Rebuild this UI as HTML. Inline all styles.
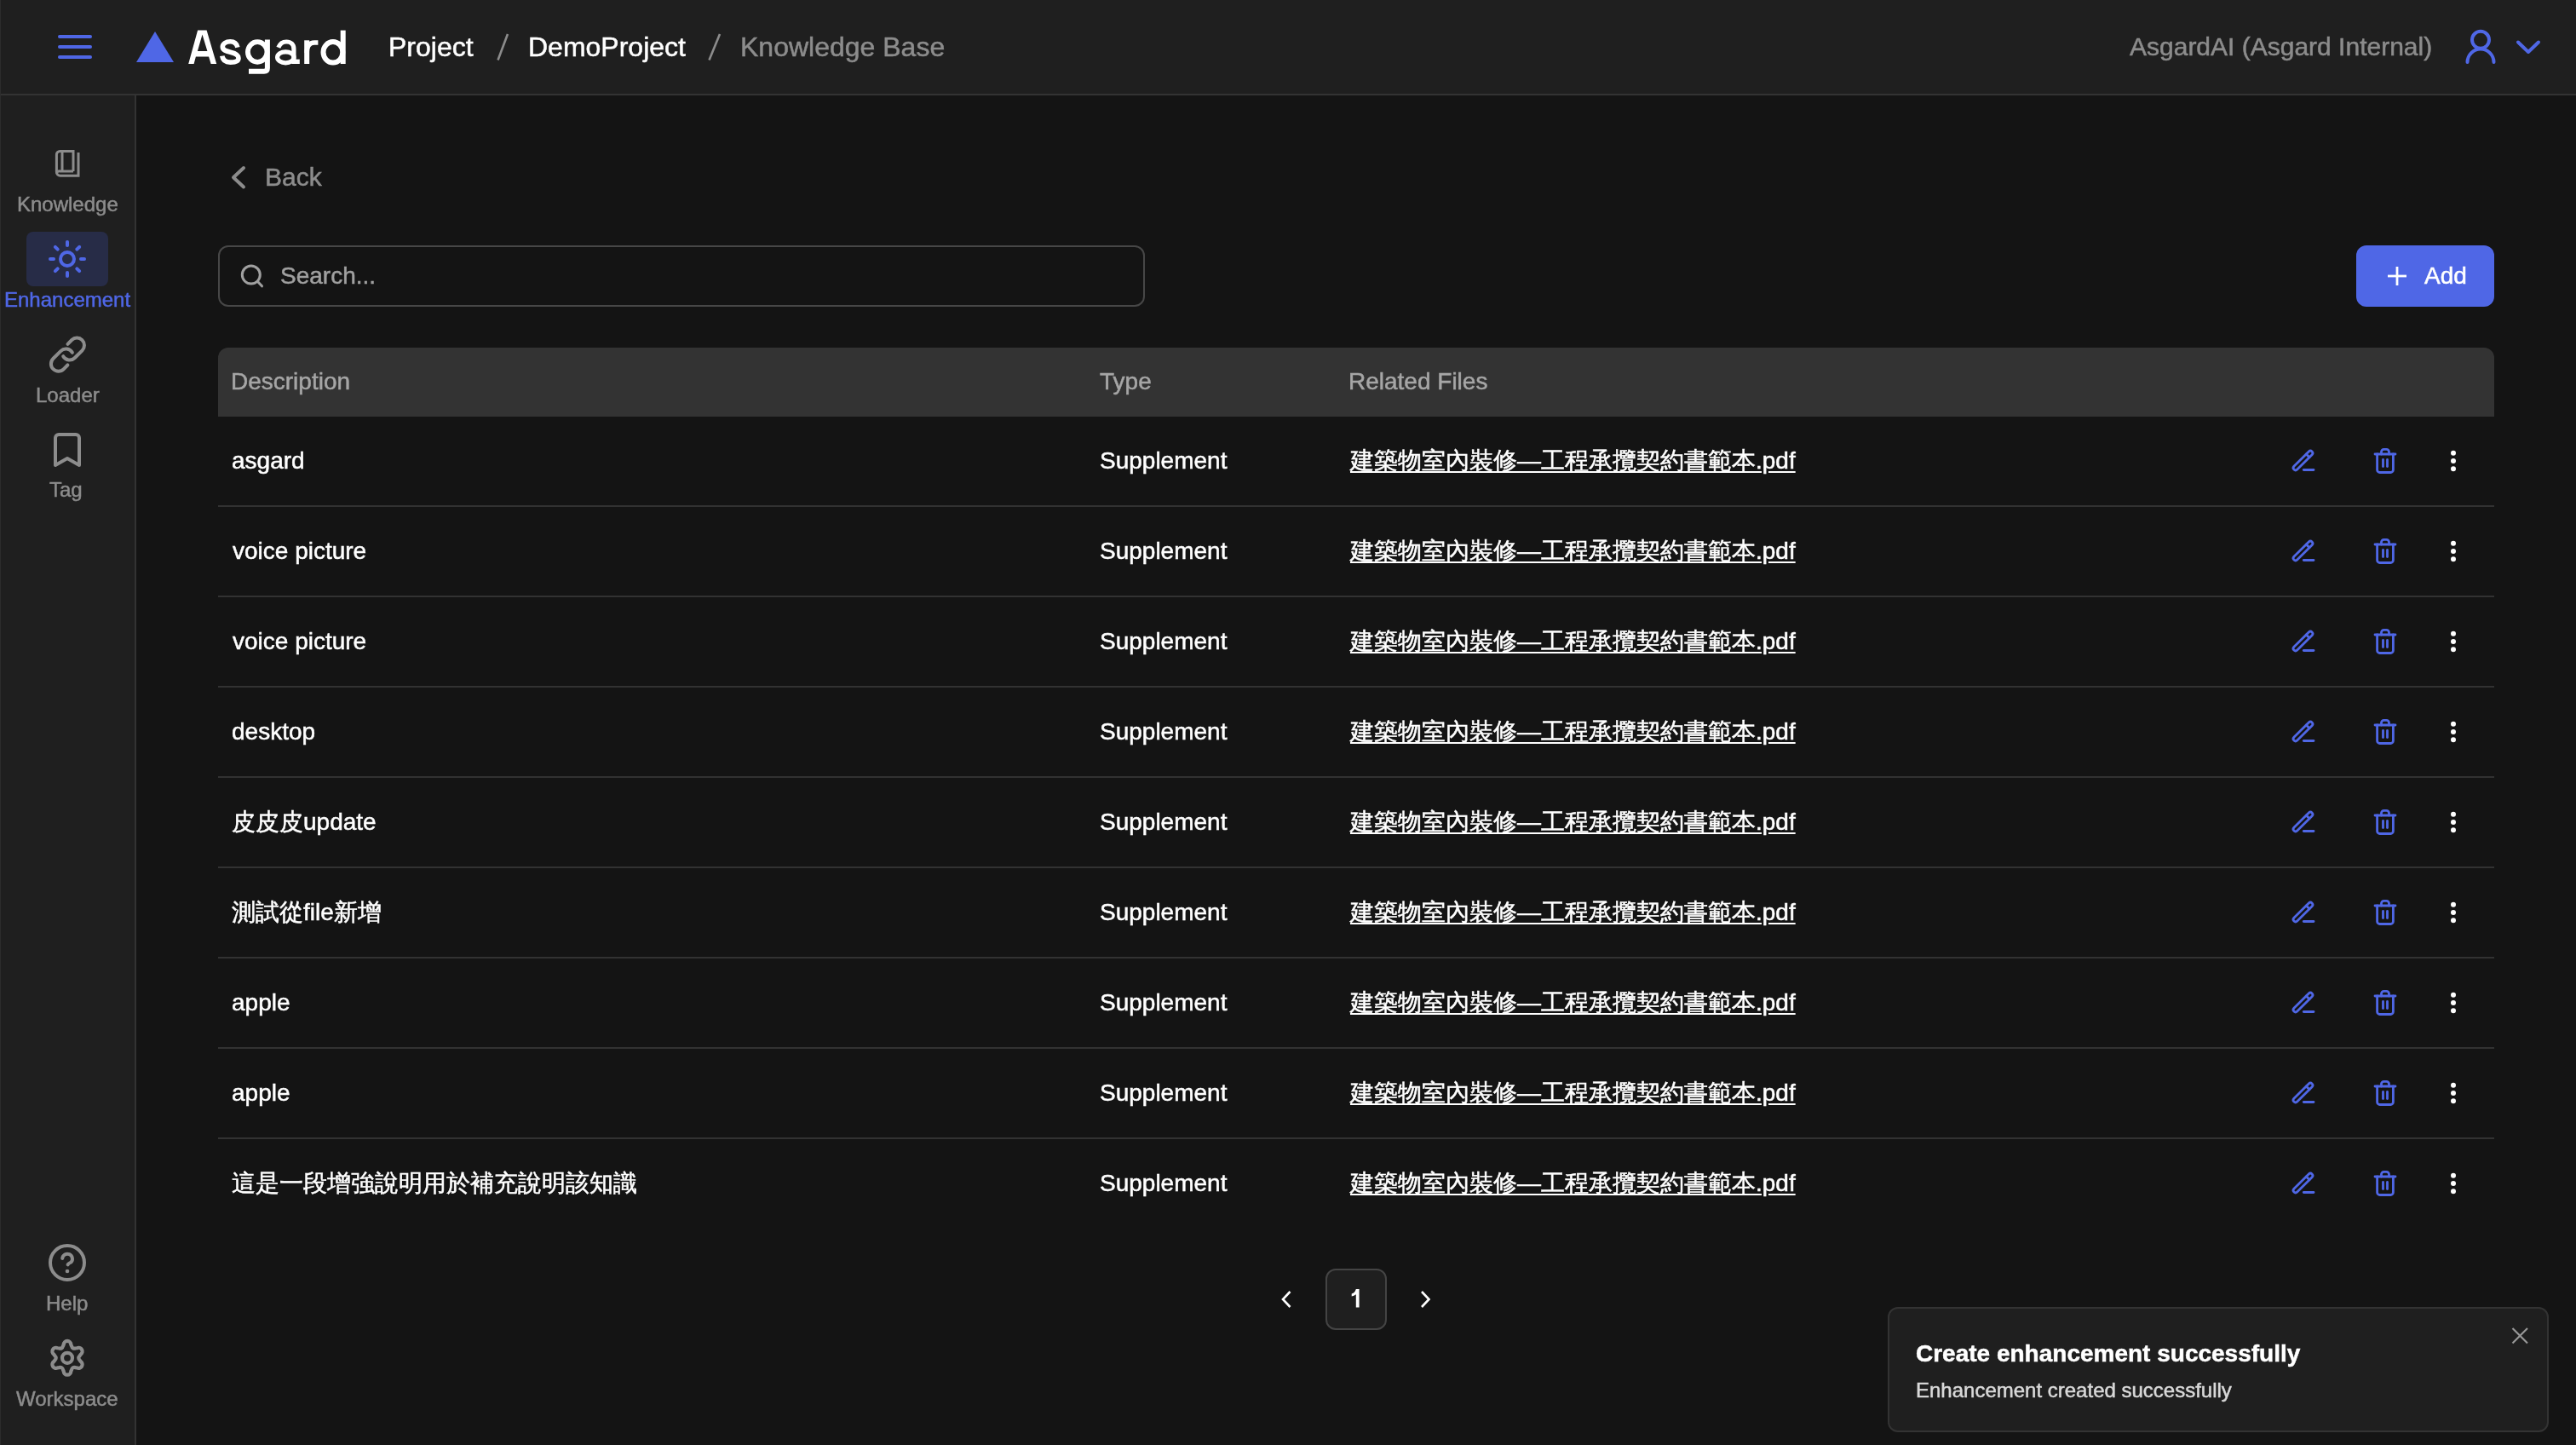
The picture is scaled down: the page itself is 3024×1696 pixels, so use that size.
<!DOCTYPE html>
<html><head><meta charset="utf-8"><style>
html,body{margin:0;padding:0;}
body{width:3024px;height:1696px;overflow:hidden;background:#141414;position:relative;font-family:"Liberation Sans",sans-serif;}
.t{position:absolute;white-space:pre;line-height:1;will-change:transform;-webkit-text-stroke-width:0.5px;}
.b{position:absolute;box-sizing:border-box;}
svg{position:absolute;left:0;top:0;overflow:visible;}
</style></head><body>
<div class="b" style="left:0;top:0;width:3024px;height:112px;background:#1f1f1f;border-bottom:2px solid #333333;"></div>
<div class="b" style="left:0;top:112px;width:160px;height:1584px;background:#1f1f1f;border-right:2px solid #333333;"></div>
<div class="b" style="left:0;top:0;width:1px;height:1696px;background:#2c2c2c;"></div>
<div class="b" style="left:31px;top:272px;width:96px;height:64px;background:#272c47;border-radius:8px;"></div>
<div class="b" style="left:256px;top:288px;width:1088px;height:72px;border:2px solid #474747;border-radius:12px;"></div>
<div class="b" style="left:2766px;top:288px;width:162px;height:72px;background:#4f67e6;border-radius:12px;"></div>
<div class="b" style="left:256px;top:408px;width:2672px;height:81px;background:#333333;border-radius:12px 12px 0 0;"></div>
<div class="b" style="left:256px;top:593px;width:2672px;height:2px;background:#323232;"></div>
<div class="b" style="left:256px;top:699px;width:2672px;height:2px;background:#323232;"></div>
<div class="b" style="left:256px;top:805px;width:2672px;height:2px;background:#323232;"></div>
<div class="b" style="left:256px;top:911px;width:2672px;height:2px;background:#323232;"></div>
<div class="b" style="left:256px;top:1017px;width:2672px;height:2px;background:#323232;"></div>
<div class="b" style="left:256px;top:1123px;width:2672px;height:2px;background:#323232;"></div>
<div class="b" style="left:256px;top:1229px;width:2672px;height:2px;background:#323232;"></div>
<div class="b" style="left:256px;top:1335px;width:2672px;height:2px;background:#323232;"></div>
<div class="b" style="left:1556px;top:1489px;width:72px;height:72px;background:#1f1f1f;border:2px solid #444444;border-radius:12px;"></div>
<div class="b" style="left:2216px;top:1534px;width:776px;height:147px;background:#1f1f1f;border:2px solid #333333;border-radius:12px;"></div>
<div class="t" style="left:455.88px;top:39.41px;font-size:32px;color:#ffffff;">Project</div>
<div class="t" style="left:619.98px;top:39.41px;font-size:32px;color:#ffffff;">DemoProject</div>
<div class="t" style="left:868.88px;top:39.41px;font-size:32px;color:#8c8c8c;">Knowledge Base</div>
<div class="t" style="left:2500.44px;top:40.10px;font-size:30px;color:#8c8c8c;">AsgardAI (Asgard Internal)</div>
<div class="t" style="left:19.62px;top:227.68px;font-size:24px;color:#8c8c8c;">Knowledge</div>
<div class="t" style="left:4.95px;top:339.68px;font-size:24px;color:#4f67e6;">Enhancement</div>
<div class="t" style="left:41.63px;top:451.68px;font-size:24px;color:#8c8c8c;">Loader</div>
<div class="t" style="left:58.32px;top:562.68px;font-size:24px;color:#8c8c8c;">Tag</div>
<div class="t" style="left:54.32px;top:1517.68px;font-size:24px;color:#8c8c8c;">Help</div>
<div class="t" style="left:18.98px;top:1629.68px;font-size:24px;color:#8c8c8c;">Workspace</div>
<div class="t" style="left:310.54px;top:193.10px;font-size:30px;color:#8c8c8c;">Back</div>
<div class="t" style="left:329.43px;top:309.79px;font-size:28px;color:#a0a0a0;">Search...</div>
<div class="t" style="left:2845.95px;top:309.79px;font-size:28px;color:#ffffff;">Add</div>
<div class="t" style="left:270.70px;top:433.79px;font-size:28px;color:#a6a6a6;">Description</div>
<div class="t" style="left:1291.37px;top:433.79px;font-size:28px;color:#a6a6a6;">Type</div>
<div class="t" style="left:1582.70px;top:433.79px;font-size:28px;color:#a6a6a6;">Related Files</div>
<div class="t" style="left:271.81px;top:526.79px;font-size:28px;color:#ffffff;">asgard</div>
<div class="t" style="left:1290.73px;top:526.79px;font-size:28px;color:#ffffff;">Supplement</div>
<div class="t" style="left:1585.00px;top:526.79px;font-size:28px;color:#ffffff;text-decoration:underline;text-underline-offset:3px;">建築物室內裝修—工程承攬契約書範本.pdf</div>
<div class="t" style="left:272.90px;top:632.79px;font-size:28px;color:#ffffff;">voice picture</div>
<div class="t" style="left:1290.73px;top:632.79px;font-size:28px;color:#ffffff;">Supplement</div>
<div class="t" style="left:1585.00px;top:632.79px;font-size:28px;color:#ffffff;text-decoration:underline;text-underline-offset:3px;">建築物室內裝修—工程承攬契約書範本.pdf</div>
<div class="t" style="left:272.90px;top:738.79px;font-size:28px;color:#ffffff;">voice picture</div>
<div class="t" style="left:1290.73px;top:738.79px;font-size:28px;color:#ffffff;">Supplement</div>
<div class="t" style="left:1585.00px;top:738.79px;font-size:28px;color:#ffffff;text-decoration:underline;text-underline-offset:3px;">建築物室內裝修—工程承攬契約書範本.pdf</div>
<div class="t" style="left:271.82px;top:844.79px;font-size:28px;color:#ffffff;">desktop</div>
<div class="t" style="left:1290.73px;top:844.79px;font-size:28px;color:#ffffff;">Supplement</div>
<div class="t" style="left:1585.00px;top:844.79px;font-size:28px;color:#ffffff;text-decoration:underline;text-underline-offset:3px;">建築物室內裝修—工程承攬契約書範本.pdf</div>
<div class="t" style="left:272.20px;top:950.79px;font-size:28px;color:#ffffff;">皮皮皮update</div>
<div class="t" style="left:1290.73px;top:950.79px;font-size:28px;color:#ffffff;">Supplement</div>
<div class="t" style="left:1585.00px;top:950.79px;font-size:28px;color:#ffffff;text-decoration:underline;text-underline-offset:3px;">建築物室內裝修—工程承攬契約書範本.pdf</div>
<div class="t" style="left:272.20px;top:1056.79px;font-size:28px;color:#ffffff;">測試從file新增</div>
<div class="t" style="left:1290.73px;top:1056.79px;font-size:28px;color:#ffffff;">Supplement</div>
<div class="t" style="left:1585.00px;top:1056.79px;font-size:28px;color:#ffffff;text-decoration:underline;text-underline-offset:3px;">建築物室內裝修—工程承攬契約書範本.pdf</div>
<div class="t" style="left:271.81px;top:1162.79px;font-size:28px;color:#ffffff;">apple</div>
<div class="t" style="left:1290.73px;top:1162.79px;font-size:28px;color:#ffffff;">Supplement</div>
<div class="t" style="left:1585.00px;top:1162.79px;font-size:28px;color:#ffffff;text-decoration:underline;text-underline-offset:3px;">建築物室內裝修—工程承攬契約書範本.pdf</div>
<div class="t" style="left:271.81px;top:1268.79px;font-size:28px;color:#ffffff;">apple</div>
<div class="t" style="left:1290.73px;top:1268.79px;font-size:28px;color:#ffffff;">Supplement</div>
<div class="t" style="left:1585.00px;top:1268.79px;font-size:28px;color:#ffffff;text-decoration:underline;text-underline-offset:3px;">建築物室內裝修—工程承攬契約書範本.pdf</div>
<div class="t" style="left:272.20px;top:1374.79px;font-size:28px;color:#ffffff;">這是一段增強說明用於補充說明該知識</div>
<div class="t" style="left:1290.73px;top:1374.79px;font-size:28px;color:#ffffff;">Supplement</div>
<div class="t" style="left:1585.00px;top:1374.79px;font-size:28px;color:#ffffff;text-decoration:underline;text-underline-offset:3px;">建築物室內裝修—工程承攬契約書範本.pdf</div>
<div class="t" style="left:2249.35px;top:1574.79px;font-size:28px;color:#ffffff;font-weight:700;">Create enhancement successfully</div>
<div class="t" style="left:2248.53px;top:1620.18px;font-size:24px;color:#d9d9d9;">Enhancement created successfully</div>
<svg width="3024" height="1696"><rect x="68" y="41" width="40" height="4" rx="2" fill="#4f67e6"/><rect x="68" y="53" width="40" height="4" rx="2" fill="#4f67e6"/><rect x="68" y="65" width="40" height="4" rx="2" fill="#4f67e6"/><polygon points="160,73 182,37 204,73" fill="#4f67e6"/><path fill="#ffffff" fill-rule="evenodd" d="M221.2 75.1 L232.1 35.5 L242.6 35.5 L254.2 75.1 L247.6 75.1 L245.1 66.5 L229.9 66.5 L227.6 75.1 Z M237.5 40.6 L231.9 59.9 L243.4 59.9 Z"/><g fill="none" stroke="#ffffff" stroke-linecap="butt"><path stroke-width="5.6" d="M278.9 55.6 C277.8 51, 274.5 48.8, 270.3 48.8 C265.3 48.8, 261.3 51.3, 261.3 55 C261.3 58.8, 265 59.8, 270.5 61.2 C276.5 62.6, 280 64.2, 280 68.2 C280 71.6, 276 73.1, 270.5 73.1 C265 73.1, 261.4 70.5, 260.8 65.6"/><ellipse stroke-width="5.8" cx="302.2" cy="61" rx="11.3" ry="11.8"/><path stroke-width="6" d="M313.9 46.6 V80 Q313.9 83.8 310 83.8 H292"/><ellipse stroke-width="5.2" cx="335.3" cy="67.3" rx="9.7" ry="6.5"/><path stroke-width="5.2" d="M326.8 55.8 C328.5 51.5, 331.5 49, 336.2 49 C341.5 49, 344.9 52, 344.9 57.5 V75"/><path stroke-width="5.4" d="M344 72.3 H351.8"/><path stroke-width="6" d="M360.2 47.3 V75"/><path stroke-width="5.4" d="M360.2 62 C360.2 54, 363.5 50, 369 50 H373.4"/><ellipse stroke-width="6" cx="390.9" cy="61.3" rx="11.4" ry="12.2"/><path stroke-width="6" d="M402.7 35.6 V75"/></g><g fill="none" stroke="#4f67e6" stroke-width="4" stroke-linecap="round" stroke-linejoin="round"><circle cx="2912" cy="46.8" r="10"/><path d="M2896.5 73 A15.5 15.5 0 0 1 2927.5 73"/><polyline points="2956,49.5 2968,61 2980,49.5"/></g><g fill="none" stroke="#8c8c8c" stroke-width="3" stroke-linecap="butt" stroke-linejoin="miter"><path d="M86 201 V177.4 H70.5 A4 4 0 0 0 66.4 181.5 V202 A4.3 4.3 0 0 0 70.7 206.3 H92 V178.9"/><path d="M86 201 H70.5 A3 3 0 0 0 66.6 203.5"/><path d="M73 177.4 V201"/></g><g fill="none" stroke="#8c8c8c" stroke-width="4" stroke-linecap="round" stroke-linejoin="round"><g transform="translate(53.5,390) scale(2.17)"><path stroke-width="1.85" d="M14.464 11 A4 4 0 0 0 8.172 10.172 l-4 4 a4 4 0 1 0 5.656 5.656 l2.1-2.1 M9.536 13 A4 4 0 0 0 15.828 13.828 l4-4 a4 4 0 0 0-5.656-5.656 l-2.2 2.2"/></g><path d="M65 546 V514 A4 4 0 0 1 69 510 H89 A4 4 0 0 1 93 514 V546 L79 538 Z"/><circle cx="79" cy="1482" r="20"/><path d="M73.2 1477 A5.9 5.9 0 1 1 83.5 1481.5 Q80 1483 79.6 1484.4"/></g><circle cx="79" cy="1492" r="2.3" fill="#8c8c8c"/><path d="M74.00 1579.80 L74.70 1578.20 A4.3 4.3 0 0 1 83.30 1578.20 L84.00 1579.80 Q84.95 1583.49 88.62 1582.47 L90.36 1582.28 A4.3 4.3 0 0 1 94.66 1589.72 L93.62 1591.13 Q90.90 1593.80 93.62 1596.47 L94.66 1597.88 A4.3 4.3 0 0 1 90.36 1605.32 L88.62 1605.13 Q84.95 1604.11 84.00 1607.80 L83.30 1609.40 A4.3 4.3 0 0 1 74.70 1609.40 L74.00 1607.80 Q73.05 1604.11 69.38 1605.13 L67.64 1605.32 A4.3 4.3 0 0 1 63.34 1597.88 L64.38 1596.47 Q67.10 1593.80 64.38 1591.13 L63.34 1589.72 A4.3 4.3 0 0 1 67.64 1582.28 L69.38 1582.47 Q73.05 1583.49 74.00 1579.80 Z" fill="none" stroke="#8c8c8c" stroke-width="4.2" stroke-linejoin="round"/><circle cx="79" cy="1593.8" r="6" fill="none" stroke="#8c8c8c" stroke-width="4.2"/><g fill="none" stroke="#4f67e6" stroke-width="4" stroke-linecap="round"><circle cx="79" cy="304" r="8"/><line x1="95.00" y1="304.00" x2="99.00" y2="304.00"/><line x1="90.31" y1="315.31" x2="93.14" y2="318.14"/><line x1="79.00" y1="320.00" x2="79.00" y2="324.00"/><line x1="67.69" y1="315.31" x2="64.86" y2="318.14"/><line x1="63.00" y1="304.00" x2="59.00" y2="304.00"/><line x1="67.69" y1="292.69" x2="64.86" y2="289.86"/><line x1="79.00" y1="288.00" x2="79.00" y2="284.00"/><line x1="90.31" y1="292.69" x2="93.14" y2="289.86"/></g><polyline points="286,197 274,208.2 286,219.5" fill="none" stroke="#8c8c8c" stroke-width="4" stroke-linecap="round" stroke-linejoin="round"/><g fill="none" stroke="#a0a0a0" stroke-width="3" stroke-linecap="round"><circle cx="294.8" cy="322.6" r="10.5"/><line x1="302.5" y1="330.5" x2="307.5" y2="335.8"/></g><g stroke="#ffffff" stroke-width="2.8" stroke-linecap="butt"><line x1="2814" y1="313" x2="2814" y2="335"/><line x1="2803" y1="324" x2="2825" y2="324"/></g><g transform="translate(0,0)"><g fill="none" stroke="#4f67e6" stroke-width="2.8" stroke-linecap="round" stroke-linejoin="round"><g transform="translate(2703.5,540.5) rotate(-45)"><rect x="-15" y="-2.7" width="30" height="5.4" rx="2.7"/><line x1="8" y1="-2.7" x2="8" y2="2.7"/></g><line x1="2704.3" y1="551.5" x2="2716" y2="551.5"/><line x1="2788" y1="533" x2="2812" y2="533"/><path d="M2795.5 533 V530.3 A3 3 0 0 1 2798.5 527.3 H2801.5 A3 3 0 0 1 2804.5 530.3 V533"/><path d="M2790.6 533 V551.5 A3 3 0 0 0 2793.6 554.5 H2806.4 A3 3 0 0 0 2809.4 551.5 V533"/><line x1="2797.5" y1="539.5" x2="2797.5" y2="547.5"/><line x1="2802.5" y1="539.5" x2="2802.5" y2="547.5"/></g><circle cx="2880" cy="531.7" r="3" fill="#ffffff"/><circle cx="2880" cy="541" r="3" fill="#ffffff"/><circle cx="2880" cy="550.3" r="3" fill="#ffffff"/></g><g transform="translate(0,106)"><g fill="none" stroke="#4f67e6" stroke-width="2.8" stroke-linecap="round" stroke-linejoin="round"><g transform="translate(2703.5,540.5) rotate(-45)"><rect x="-15" y="-2.7" width="30" height="5.4" rx="2.7"/><line x1="8" y1="-2.7" x2="8" y2="2.7"/></g><line x1="2704.3" y1="551.5" x2="2716" y2="551.5"/><line x1="2788" y1="533" x2="2812" y2="533"/><path d="M2795.5 533 V530.3 A3 3 0 0 1 2798.5 527.3 H2801.5 A3 3 0 0 1 2804.5 530.3 V533"/><path d="M2790.6 533 V551.5 A3 3 0 0 0 2793.6 554.5 H2806.4 A3 3 0 0 0 2809.4 551.5 V533"/><line x1="2797.5" y1="539.5" x2="2797.5" y2="547.5"/><line x1="2802.5" y1="539.5" x2="2802.5" y2="547.5"/></g><circle cx="2880" cy="531.7" r="3" fill="#ffffff"/><circle cx="2880" cy="541" r="3" fill="#ffffff"/><circle cx="2880" cy="550.3" r="3" fill="#ffffff"/></g><g transform="translate(0,212)"><g fill="none" stroke="#4f67e6" stroke-width="2.8" stroke-linecap="round" stroke-linejoin="round"><g transform="translate(2703.5,540.5) rotate(-45)"><rect x="-15" y="-2.7" width="30" height="5.4" rx="2.7"/><line x1="8" y1="-2.7" x2="8" y2="2.7"/></g><line x1="2704.3" y1="551.5" x2="2716" y2="551.5"/><line x1="2788" y1="533" x2="2812" y2="533"/><path d="M2795.5 533 V530.3 A3 3 0 0 1 2798.5 527.3 H2801.5 A3 3 0 0 1 2804.5 530.3 V533"/><path d="M2790.6 533 V551.5 A3 3 0 0 0 2793.6 554.5 H2806.4 A3 3 0 0 0 2809.4 551.5 V533"/><line x1="2797.5" y1="539.5" x2="2797.5" y2="547.5"/><line x1="2802.5" y1="539.5" x2="2802.5" y2="547.5"/></g><circle cx="2880" cy="531.7" r="3" fill="#ffffff"/><circle cx="2880" cy="541" r="3" fill="#ffffff"/><circle cx="2880" cy="550.3" r="3" fill="#ffffff"/></g><g transform="translate(0,318)"><g fill="none" stroke="#4f67e6" stroke-width="2.8" stroke-linecap="round" stroke-linejoin="round"><g transform="translate(2703.5,540.5) rotate(-45)"><rect x="-15" y="-2.7" width="30" height="5.4" rx="2.7"/><line x1="8" y1="-2.7" x2="8" y2="2.7"/></g><line x1="2704.3" y1="551.5" x2="2716" y2="551.5"/><line x1="2788" y1="533" x2="2812" y2="533"/><path d="M2795.5 533 V530.3 A3 3 0 0 1 2798.5 527.3 H2801.5 A3 3 0 0 1 2804.5 530.3 V533"/><path d="M2790.6 533 V551.5 A3 3 0 0 0 2793.6 554.5 H2806.4 A3 3 0 0 0 2809.4 551.5 V533"/><line x1="2797.5" y1="539.5" x2="2797.5" y2="547.5"/><line x1="2802.5" y1="539.5" x2="2802.5" y2="547.5"/></g><circle cx="2880" cy="531.7" r="3" fill="#ffffff"/><circle cx="2880" cy="541" r="3" fill="#ffffff"/><circle cx="2880" cy="550.3" r="3" fill="#ffffff"/></g><g transform="translate(0,424)"><g fill="none" stroke="#4f67e6" stroke-width="2.8" stroke-linecap="round" stroke-linejoin="round"><g transform="translate(2703.5,540.5) rotate(-45)"><rect x="-15" y="-2.7" width="30" height="5.4" rx="2.7"/><line x1="8" y1="-2.7" x2="8" y2="2.7"/></g><line x1="2704.3" y1="551.5" x2="2716" y2="551.5"/><line x1="2788" y1="533" x2="2812" y2="533"/><path d="M2795.5 533 V530.3 A3 3 0 0 1 2798.5 527.3 H2801.5 A3 3 0 0 1 2804.5 530.3 V533"/><path d="M2790.6 533 V551.5 A3 3 0 0 0 2793.6 554.5 H2806.4 A3 3 0 0 0 2809.4 551.5 V533"/><line x1="2797.5" y1="539.5" x2="2797.5" y2="547.5"/><line x1="2802.5" y1="539.5" x2="2802.5" y2="547.5"/></g><circle cx="2880" cy="531.7" r="3" fill="#ffffff"/><circle cx="2880" cy="541" r="3" fill="#ffffff"/><circle cx="2880" cy="550.3" r="3" fill="#ffffff"/></g><g transform="translate(0,530)"><g fill="none" stroke="#4f67e6" stroke-width="2.8" stroke-linecap="round" stroke-linejoin="round"><g transform="translate(2703.5,540.5) rotate(-45)"><rect x="-15" y="-2.7" width="30" height="5.4" rx="2.7"/><line x1="8" y1="-2.7" x2="8" y2="2.7"/></g><line x1="2704.3" y1="551.5" x2="2716" y2="551.5"/><line x1="2788" y1="533" x2="2812" y2="533"/><path d="M2795.5 533 V530.3 A3 3 0 0 1 2798.5 527.3 H2801.5 A3 3 0 0 1 2804.5 530.3 V533"/><path d="M2790.6 533 V551.5 A3 3 0 0 0 2793.6 554.5 H2806.4 A3 3 0 0 0 2809.4 551.5 V533"/><line x1="2797.5" y1="539.5" x2="2797.5" y2="547.5"/><line x1="2802.5" y1="539.5" x2="2802.5" y2="547.5"/></g><circle cx="2880" cy="531.7" r="3" fill="#ffffff"/><circle cx="2880" cy="541" r="3" fill="#ffffff"/><circle cx="2880" cy="550.3" r="3" fill="#ffffff"/></g><g transform="translate(0,636)"><g fill="none" stroke="#4f67e6" stroke-width="2.8" stroke-linecap="round" stroke-linejoin="round"><g transform="translate(2703.5,540.5) rotate(-45)"><rect x="-15" y="-2.7" width="30" height="5.4" rx="2.7"/><line x1="8" y1="-2.7" x2="8" y2="2.7"/></g><line x1="2704.3" y1="551.5" x2="2716" y2="551.5"/><line x1="2788" y1="533" x2="2812" y2="533"/><path d="M2795.5 533 V530.3 A3 3 0 0 1 2798.5 527.3 H2801.5 A3 3 0 0 1 2804.5 530.3 V533"/><path d="M2790.6 533 V551.5 A3 3 0 0 0 2793.6 554.5 H2806.4 A3 3 0 0 0 2809.4 551.5 V533"/><line x1="2797.5" y1="539.5" x2="2797.5" y2="547.5"/><line x1="2802.5" y1="539.5" x2="2802.5" y2="547.5"/></g><circle cx="2880" cy="531.7" r="3" fill="#ffffff"/><circle cx="2880" cy="541" r="3" fill="#ffffff"/><circle cx="2880" cy="550.3" r="3" fill="#ffffff"/></g><g transform="translate(0,742)"><g fill="none" stroke="#4f67e6" stroke-width="2.8" stroke-linecap="round" stroke-linejoin="round"><g transform="translate(2703.5,540.5) rotate(-45)"><rect x="-15" y="-2.7" width="30" height="5.4" rx="2.7"/><line x1="8" y1="-2.7" x2="8" y2="2.7"/></g><line x1="2704.3" y1="551.5" x2="2716" y2="551.5"/><line x1="2788" y1="533" x2="2812" y2="533"/><path d="M2795.5 533 V530.3 A3 3 0 0 1 2798.5 527.3 H2801.5 A3 3 0 0 1 2804.5 530.3 V533"/><path d="M2790.6 533 V551.5 A3 3 0 0 0 2793.6 554.5 H2806.4 A3 3 0 0 0 2809.4 551.5 V533"/><line x1="2797.5" y1="539.5" x2="2797.5" y2="547.5"/><line x1="2802.5" y1="539.5" x2="2802.5" y2="547.5"/></g><circle cx="2880" cy="531.7" r="3" fill="#ffffff"/><circle cx="2880" cy="541" r="3" fill="#ffffff"/><circle cx="2880" cy="550.3" r="3" fill="#ffffff"/></g><g transform="translate(0,848)"><g fill="none" stroke="#4f67e6" stroke-width="2.8" stroke-linecap="round" stroke-linejoin="round"><g transform="translate(2703.5,540.5) rotate(-45)"><rect x="-15" y="-2.7" width="30" height="5.4" rx="2.7"/><line x1="8" y1="-2.7" x2="8" y2="2.7"/></g><line x1="2704.3" y1="551.5" x2="2716" y2="551.5"/><line x1="2788" y1="533" x2="2812" y2="533"/><path d="M2795.5 533 V530.3 A3 3 0 0 1 2798.5 527.3 H2801.5 A3 3 0 0 1 2804.5 530.3 V533"/><path d="M2790.6 533 V551.5 A3 3 0 0 0 2793.6 554.5 H2806.4 A3 3 0 0 0 2809.4 551.5 V533"/><line x1="2797.5" y1="539.5" x2="2797.5" y2="547.5"/><line x1="2802.5" y1="539.5" x2="2802.5" y2="547.5"/></g><circle cx="2880" cy="531.7" r="3" fill="#ffffff"/><circle cx="2880" cy="541" r="3" fill="#ffffff"/><circle cx="2880" cy="550.3" r="3" fill="#ffffff"/></g><g fill="none" stroke="#ffffff" stroke-width="2.6" stroke-linecap="butt" stroke-linejoin="miter"><polyline points="1514.5,1516 1506,1525 1514.5,1534"/><polyline points="1669,1516 1677.5,1525 1669,1534"/></g><path d="M1591.8 1513 H1595.6 V1534.4 H1591.8 V1519.2 Q1589.5 1521.2 1586.7 1521.5 V1518.4 Q1590.5 1517.6 1591.8 1513 Z" fill="#ffffff"/><g stroke="#999999" stroke-width="2.2"><line x1="2949.5" y1="1559" x2="2967" y2="1576.5"/><line x1="2967" y1="1559" x2="2949.5" y2="1576.5"/></g><g stroke="#8c8c8c" stroke-width="2.6"><line x1="596" y1="40" x2="584.5" y2="70.5"/><line x1="845" y1="40" x2="832.5" y2="70.5"/></g></svg>
<script>(function(){var w=window.innerWidth;if(w&&Math.abs(w-3024)>4){document.documentElement.style.zoom=(w/3024);}})();</script>
</body></html>
